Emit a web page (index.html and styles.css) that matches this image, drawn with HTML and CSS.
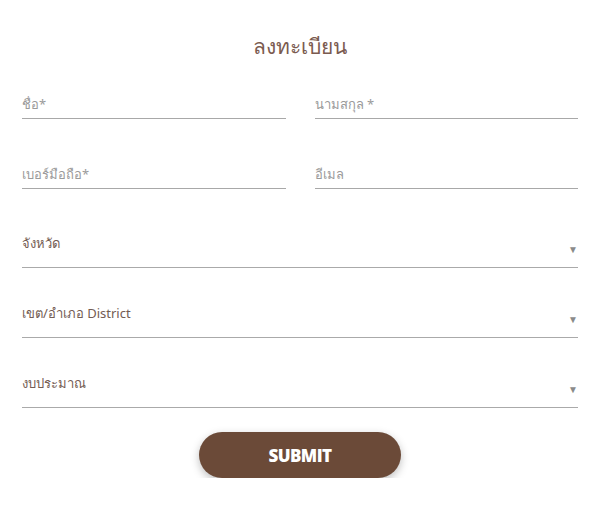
FILE: index.html
```html
<!DOCTYPE html>
<html lang="th">

<head>
  <meta charset="UTF-8">
  <meta name="viewport" content="width=device-width, initial-scale=1.0">
  <title>ลงทะเบียน</title>
  <link rel="stylesheet" href="styles.css">
</head>

<body>
  <form class="register">
    <h2 class="register-title">ลงทะเบียน</h2>

    <div class="register-row">
      <input class="field" type="text" placeholder="ชื่อ*">
      <input class="field" type="text" placeholder="นามสกุล *">
    </div>

    <div class="register-row">
      <input class="field" type="tel" placeholder="เบอร์มือถือ*">
      <input class="field" type="email" placeholder="อีเมล">
    </div>

    <label class="pick">
      <select class="pick-select">
        <option>จังหวัด</option>
      </select>
      <span class="pick-arrow">▼</span>
    </label>

    <label class="pick">
      <select class="pick-select">
        <option>เขต/อำเภอ District</option>
      </select>
      <span class="pick-arrow">▼</span>
    </label>

    <label class="pick">
      <select class="pick-select">
        <option>งบประมาณ</option>
      </select>
      <span class="pick-arrow">▼</span>
    </label>

    <div class="register-foot">
      <button class="register-submit" type="button">SUBMIT</button>
    </div>
  </form>
</body>

</html>
```

FILE: styles.css
```css
body {
  margin: 0;
  background-color: #fff;
  font-family: "Noto Sans", "Liberation Sans", "DejaVu Sans", sans-serif;
}

.register {
  padding: 30px 22px 0;
}

.register-title {
  margin: 0 0 28px;
  text-align: center;
  font-size: 21px;
  font-weight: normal;
  color: #7b5b50;
}

.register-row {
  display: flex;
  gap: 29px;
  margin-bottom: 42px;
}

.field {
  flex: 1;
  min-width: 0;
  border: 0;
  border-bottom: 1px solid #a8a8a8;
  padding: 4px 0 5px;
  font-family: inherit;
  font-size: 13px;
  color: #555;
  outline: none;
  background: transparent;
}

.field::placeholder {
  color: #9a9a9a;
}

.pick {
  position: relative;
  display: block;
  margin-bottom: 33px;
}

.pick:last-of-type {
  margin-bottom: 24px;
}

.pick-select {
  -webkit-appearance: none;
  appearance: none;
  width: 100%;
  border: 0;
  border-bottom: 1px solid #aaa;
  border-radius: 0;
  background: transparent;
  padding: 3px 0 15px;
  font-family: inherit;
  font-size: 13px;
  color: #735c53;
  outline: none;
}

.pick-arrow {
  position: absolute;
  right: 0;
  top: 11px;
  font-size: 10px;
  color: #8a8a8a;
}

.register-foot {
  text-align: center;
}

.register-submit {
  width: 202px;
  height: 46px;
  border: 0;
  border-radius: 23px;
  background-color: #6b4a38;
  color: #fff;
  font-family: "Open Sans", "Liberation Sans", sans-serif;
  font-size: 17px;
  font-weight: 800;
  letter-spacing: -0.6px;
  box-shadow: 0 3px 8px rgba(0, 0, 0, 0.25);
  cursor: pointer;
}
```
